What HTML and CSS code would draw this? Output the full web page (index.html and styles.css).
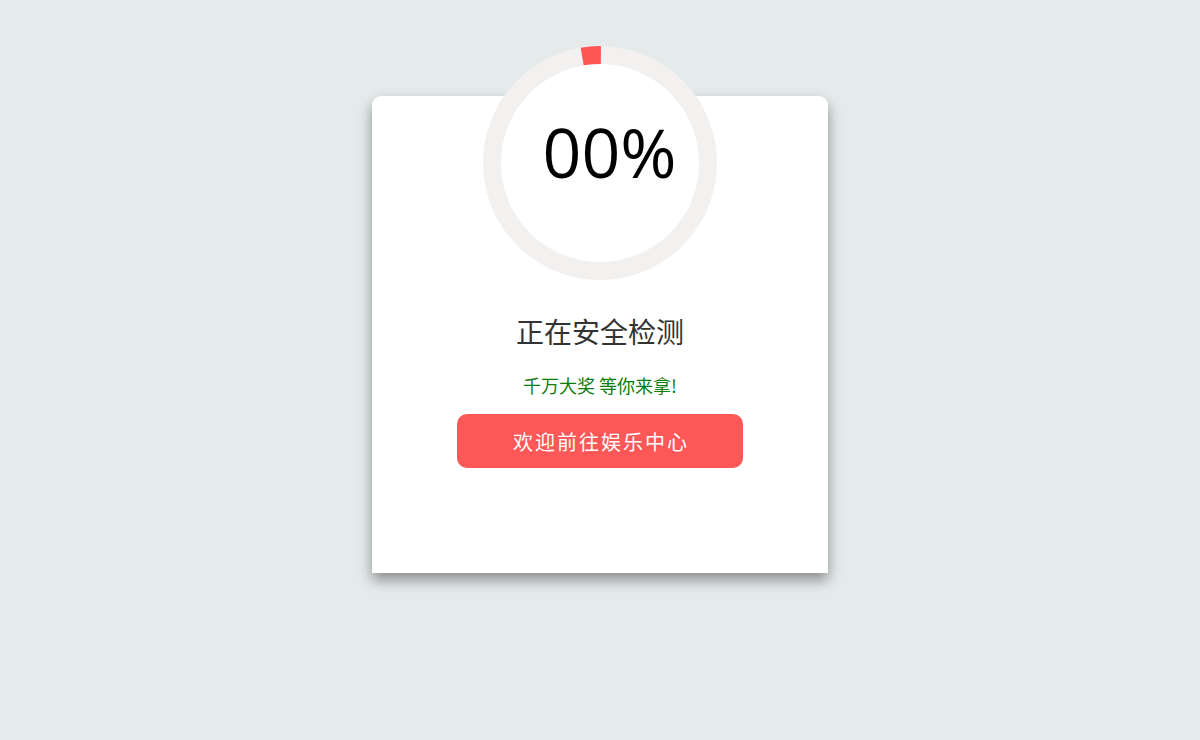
FILE: index.html
```html
<!DOCTYPE html>
<html lang="zh-CN">
<head>
<meta charset="utf-8">
<title>正在安全检测</title>
<link rel="stylesheet" href="styles.css">
</head>
<body>
<div class="page">
  <div class="card">
    <div class="ring">
      <svg class="arc" width="234" height="234" viewBox="0 0 234 234">
        <path d="M99.2 10.5 A108 108 0 0 1 117.9 9" fill="none" stroke="#fe5555" stroke-width="18"/>
      </svg>
      <span class="percent">00%</span>
    </div>
    <h1 class="title">正在安全检测</h1>
    <p class="subtitle">千万大奖 等你来拿!</p>
    <a class="btn" href="#">欢迎前往娱乐中心</a>
  </div>
</div>
</body>
</html>
```
FILE: styles.css
```css
html, body {
  margin: 0;
  padding: 0;
}
body {
  background: #e5eaeb;
  font-family: "Noto Sans CJK SC", "Noto Sans", sans-serif;
  height: 740px;
  overflow: hidden;
}
.page {
  display: flex;
  justify-content: center;
  padding-top: 96px;
}
.card {
  width: 456px;
  height: 477px;
  background: #fff;
  border-radius: 9px 9px 0 0;
  box-shadow: 0 7px 14px rgba(0, 0, 0, 0.4);
  display: flex;
  flex-direction: column;
  align-items: center;
}
.ring {
  position: relative;
  box-sizing: border-box;
  width: 234px;
  height: 234px;
  margin-top: -50px;
  border: 18px solid #f3f1f0;
  border-radius: 50%;
  background: #fff;
  display: flex;
  align-items: center;
  justify-content: center;
}
.arc {
  position: absolute;
  left: -18px;
  top: -18px;
}
.percent {
  font-family: "Open Sans", "Liberation Sans", sans-serif;
  font-size: 68px;
  line-height: 68px;
  color: #000;
  padding-left: 19px;
  padding-bottom: 22px;
}
.title {
  margin: 30px 0 0;
  font-size: 28px;
  line-height: 42px;
  font-weight: normal;
  color: #333;
}
.subtitle {
  margin: 20px 0 0;
  font-size: 18px;
  line-height: 27px;
  color: #0b7d0b;
}
.btn {
  margin-top: 15px;
  width: 286px;
  height: 54px;
  border-radius: 10px;
  background: #fe5757;
  color: #fff;
  font-size: 20px;
  letter-spacing: 2px;
  text-indent: 2px;
  text-decoration: none;
  display: flex;
  align-items: center;
  justify-content: center;
}
```
